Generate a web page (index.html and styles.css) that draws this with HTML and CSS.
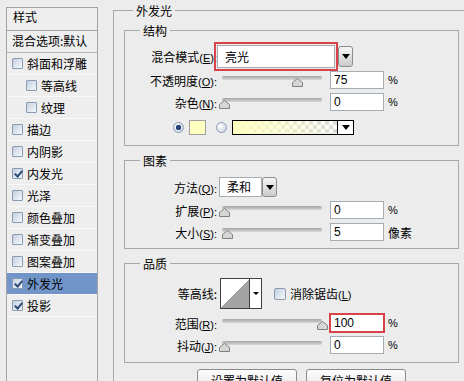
FILE: index.html
```html
<!DOCTYPE html>
<html lang="zh-CN">
<head>
  <meta charset="UTF-8" />
  <title>图层样式 - 外发光</title>
  <link rel="stylesheet" href="styles.css">
</head>
<body>

  <div class="dialog">

    <!-- style list -->
    <div class="styles">
      <div class="styles-head">样式</div>
      <div class="styles-blend">混合选项:默认</div>
      <div class="fx"><span class="cb"></span>斜面和浮雕</div>
      <div class="fx sub"><span class="cb"></span>等高线</div>
      <div class="fx sub"><span class="cb"></span>纹理</div>
      <div class="fx"><span class="cb"></span>描边</div>
      <div class="fx"><span class="cb"></span>内阴影</div>
      <div class="fx"><span class="cb on"></span>内发光</div>
      <div class="fx"><span class="cb"></span>光泽</div>
      <div class="fx"><span class="cb"></span>颜色叠加</div>
      <div class="fx"><span class="cb"></span>渐变叠加</div>
      <div class="fx"><span class="cb"></span>图案叠加</div>
      <div class="fx active"><span class="cb on"></span>外发光</div>
      <div class="fx"><span class="cb on"></span>投影</div>
    </div>

    <!-- outer glow settings -->
    <fieldset class="effect">
      <legend>外发光</legend>
      <div class="effect-body">

        <fieldset class="group group-structure">
          <legend>结构</legend>
          <div class="row row-blend">
            <label class="lbl">混合模式<span class="key">(<u>E</u>):</span></label>
            <div class="field field-blend">亮光</div>
            <span class="drop"></span>
          </div>
          <div class="row">
            <label class="lbl">不透明度<span class="key">(<u>O</u>):</span></label>
            <div class="slider"><div class="track"></div><svg class="thumb" style="--v:75" viewBox="0 0 11 9"><path d="M5.5 .5L10.5 4.5V8.5H.5V4.5Z"/></svg></div>
            <input class="num" value="75">
            <span class="unit">%</span>
          </div>
          <div class="row row-gap">
            <label class="lbl">杂色<span class="key">(<u>N</u>):</span></label>
            <div class="slider"><div class="track"></div><svg class="thumb" style="--v:0" viewBox="0 0 11 9"><path d="M5.5 .5L10.5 4.5V8.5H.5V4.5Z"/></svg></div>
            <input class="num" value="0">
            <span class="unit">%</span>
          </div>
          <div class="row row-color">
            <span class="radio on"></span>
            <span class="swatch"></span>
            <span class="radio"></span>
            <span class="gradient"><span class="gradient-fill"></span><span class="gradient-drop"></span></span>
          </div>
        </fieldset>

        <fieldset class="group group-elements">
          <legend>图素</legend>
          <div class="row row-method">
            <label class="lbl">方法<span class="key">(<u>Q</u>):</span></label>
            <div class="combo"><span class="field field-method">柔和</span><span class="drop"></span></div>
          </div>
          <div class="row row-gap">
            <label class="lbl">扩展<span class="key">(<u>P</u>):</span></label>
            <div class="slider"><div class="track"></div><svg class="thumb" style="--v:0" viewBox="0 0 11 9"><path d="M5.5 .5L10.5 4.5V8.5H.5V4.5Z"/></svg></div>
            <input class="num" value="0">
            <span class="unit">%</span>
          </div>
          <div class="row row-gap">
            <label class="lbl">大小<span class="key">(<u>S</u>):</span></label>
            <div class="slider"><div class="track"></div><svg class="thumb" style="--v:4" viewBox="0 0 11 9"><path d="M5.5 .5L10.5 4.5V8.5H.5V4.5Z"/></svg></div>
            <input class="num" value="5">
            <span class="unit unit-cjk">像素</span>
          </div>
        </fieldset>

        <fieldset class="group group-quality">
          <legend>品质</legend>
          <div class="row row-contour">
            <label class="lbl">等高线:</label>
            <span class="contour"><span class="contour-curve"></span><span class="contour-drop"></span></span>
            <span class="cb cb-aa"></span>
            <span class="aa">消除锯齿<span class="key">(<u>L</u>)</span></span>
          </div>
          <div class="row row-range">
            <label class="lbl">范围<span class="key">(<u>R</u>):</span></label>
            <div class="slider"><div class="track"></div><svg class="thumb" style="--v:100" viewBox="0 0 11 9"><path d="M5.5 .5L10.5 4.5V8.5H.5V4.5Z"/></svg></div>
            <input class="num num-marked" value="100">
            <span class="unit">%</span>
          </div>
          <div class="row row-jitter">
            <label class="lbl">抖动<span class="key">(<u>J</u>):</span></label>
            <div class="slider"><div class="track"></div><svg class="thumb" style="--v:0" viewBox="0 0 11 9"><path d="M5.5 .5L10.5 4.5V8.5H.5V4.5Z"/></svg></div>
            <input class="num" value="0">
            <span class="unit">%</span>
          </div>
        </fieldset>

        <div class="buttons">
          <button class="btn">设置为默认值</button>
          <button class="btn">复位为默认值</button>
        </div>

      </div>
    </fieldset>

  </div>

</body>
</html>
```

FILE: styles.css
```css
* {
  box-sizing: border-box;
}

body {
  margin: 0;
  width: 464px;
  height: 381px;
  overflow: hidden;
  background-color: #ececec;
  font-family: "Noto Sans CJK SC", sans-serif;
  font-size: 12px;
  color: #000;
}

.dialog {
  display: flex;
  align-items: flex-start;
  gap: 15px;
  padding-left: 6px;
}

/* left style list */
.styles {
  flex: none;
  width: 92px;
  height: 390px;
  margin-top: 7px;
  border: 1px solid #a2a2a2;
  background-color: #eeeeee;
}

.styles-head {
  height: 23px;
  padding-left: 6px;
  line-height: 17px;
  border-bottom: 1px solid #a2a2a2;
}

.styles-blend {
  height: 22px;
  padding-left: 5px;
  line-height: 20px;
  border-bottom: 1px solid #b4b4b4;
  white-space: nowrap;
}

.fx {
  display: flex;
  align-items: center;
  height: 22px;
  padding-left: 5px;
  border-bottom: 1px solid #f8f8f8;
}

.fx.sub {
  padding-left: 19px;
}

.fx.active {
  background-color: #7195c8;
}

.cb {
  position: relative;
  flex: none;
  width: 11px;
  height: 11px;
  margin-right: 4px;
  border: 1px solid #8a9cb4;
  border-radius: 1px;
  background: linear-gradient(135deg, #c4d0de, #f6f8fb);
}

.cb.on::after {
  content: "";
  position: absolute;
  left: 3px;
  top: 0;
  width: 3px;
  height: 6px;
  border: solid #2c4a7a;
  border-width: 0 2px 2px 0;
  transform: rotate(40deg);
}

/* fieldsets */
fieldset {
  margin: 0;
  padding: 0;
  min-width: 0;
  border: 1px solid #a8a8a8;
}

legend {
  padding: 0 3px;
  line-height: 17px;
  font-size: 12px;
}

.effect {
  flex: none;
  width: 360px;
  height: 390px;
  margin-top: 2px;
}

.effect legend {
  margin-left: 19px;
}

.effect-body {
  padding: 3px 0 0 10px;
}

.group {
  width: 335px;
}

.group legend {
  margin-left: 15px;
}

.group-structure {
  padding: 3px 0 11px;
}

.group-elements {
  margin-top: 6px;
  padding: 8px 0 7px;
}

.group-quality {
  margin-top: 6px;
  padding: 6px 0 8px;
}

/* rows */
.row {
  display: flex;
  align-items: center;
  height: 18px;
}

.row-gap {
  margin-top: 4px;
}

.row-blend {
  height: 29px;
}

.row-color {
  height: 14px;
  margin-top: 9px;
  padding-left: 48px;
}

.row-method {
  height: 20px;
}

.row-contour {
  height: 31px;
}

.row-range {
  height: 20px;
  margin-top: 4px;
}

.row-jitter {
  margin-top: 3px;
}

.lbl {
  flex: none;
  width: 92px;
  text-align: right;
  white-space: nowrap;
}

.key {
  font-family: "Liberation Sans", sans-serif;
  font-size: 11px;
}

/* controls */
.field {
  background-color: #fff;
  border: 1px solid #a5acb2;
  padding-left: 7px;
  white-space: nowrap;
}

.field-blend {
  width: 118px;
  height: 23px;
  line-height: 21px;
  outline: 2px solid #d8424a;
  outline-offset: 1px;
}

.drop {
  display: flex;
  align-items: center;
  justify-content: center;
  flex: none;
  width: 15px;
  height: 21px;
  margin-left: 3px;
  border: 1px solid #8c8c8c;
  border-radius: 3px;
  background: linear-gradient(#f6f6f6, #cbcbcb);
}

.drop::before {
  content: "";
  border-left: 4px solid transparent;
  border-right: 4px solid transparent;
  border-top: 5px solid #000;
}

.combo {
  display: flex;
  height: 20px;
  margin-left: 2px;
}

.field-method {
  width: 43px;
  height: 20px;
  line-height: 18px;
}

.combo .drop {
  height: 20px;
  margin-left: 0;
}

.slider {
  position: relative;
  flex: none;
  width: 100px;
  height: 18px;
  margin-left: 5px;
}

.track {
  height: 4px;
  margin-top: 5px;
  border-radius: 2px;
  background: linear-gradient(#a4a4a4, #d8d8d8);
}

.thumb {
  position: absolute;
  top: 7px;
  left: calc(var(--v) * 0.98px - 3.5px);
  width: 11px;
  height: 9px;
  fill: #d6d6d6;
  stroke: #808080;
  stroke-width: 1;
}

.num {
  flex: none;
  width: 54px;
  height: 18px;
  margin: 0 0 0 8px;
  padding: 0 0 0 3px;
  border: 1px solid #a5acb2;
  background-color: #fff;
  font-family: "Liberation Sans", sans-serif;
  font-size: 12px;
  color: #000;
}

.num-marked {
  outline: 2px solid #d8424a;
  outline-offset: -1px;
}

.unit {
  margin-left: 4px;
  font-family: "Liberation Sans", sans-serif;
  font-size: 11px;
}

.unit-cjk {
  font-family: "Noto Sans CJK SC", sans-serif;
  font-size: 12px;
}

.radio {
  flex: none;
  width: 11px;
  height: 11px;
  border: 1px solid #8a9cb4;
  border-radius: 50%;
  background: radial-gradient(circle at 35% 35%, #fff, #c2cedc);
}

.radio.on {
  background: radial-gradient(circle, #27447c 0 2.5px, transparent 3px),
              radial-gradient(circle at 35% 35%, #fff, #c2cedc);
}

.swatch {
  flex: none;
  width: 17px;
  height: 15px;
  margin: 0 10px 0 5px;
  border: 1px solid #a0a0a0;
  background-color: #ffffbf;
}

.gradient {
  display: flex;
  flex: none;
  width: 122px;
  height: 15px;
  margin-left: 5px;
  border: 1px solid #000;
}

.gradient-fill {
  flex: 1;
  background: linear-gradient(90deg, #ffffc0, rgba(255, 255, 192, 0)),
              repeating-conic-gradient(#dadada 0 25%, #fff 0 50%) 0 0 / 8px 8px;
}

.gradient-drop {
  display: flex;
  align-items: center;
  justify-content: center;
  width: 16px;
  border-left: 1px solid #000;
  background-color: #fff;
}

.gradient-drop::before {
  content: "";
  border-left: 4px solid transparent;
  border-right: 4px solid transparent;
  border-top: 5px solid #000;
}

.contour {
  display: flex;
  flex: none;
  width: 42px;
  height: 31px;
  margin-left: 3px;
  border: 1px solid #404040;
  background-color: #fff;
}

.contour-curve {
  flex: 1;
  background: linear-gradient(to top left, #a3a3a3 50%, #fff 50%);
}

.contour-drop {
  display: flex;
  align-items: center;
  justify-content: center;
  width: 12px;
  border-left: 1px solid #404040;
}

.contour-drop::before {
  content: "";
  border-left: 3px solid transparent;
  border-right: 3px solid transparent;
  border-top: 3px solid #000;
}

.cb-aa {
  width: 12px;
  height: 12px;
  margin: 0 4px 0 12px;
  border-radius: 2px;
}

.aa {
  white-space: nowrap;
}

/* bottom buttons */
.buttons {
  display: flex;
  gap: 9px;
  margin: 6px 0 0 73px;
}

.btn {
  width: 100px;
  height: 23px;
  padding: 0;
  border: 1px solid #8a8a8a;
  border-radius: 3px;
  background: linear-gradient(#fdfdfd, #e2e2e2);
  font-family: "Noto Sans CJK SC", sans-serif;
  font-size: 12px;
  color: #000;
}
```
